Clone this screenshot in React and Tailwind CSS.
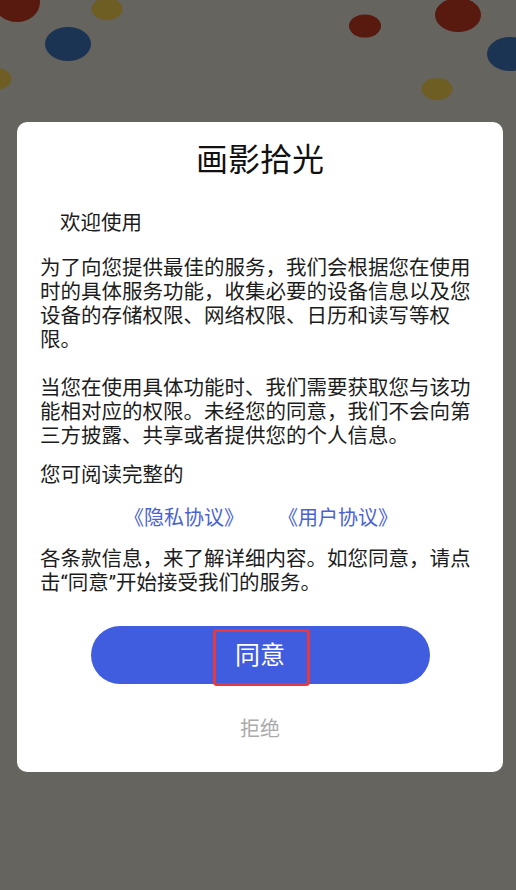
import React from 'react';

const font = { fontFamily: 'Roboto, "Noto Sans CJK SC", sans-serif' };

// dimmed confetti dots behind the dialog
function Dots() {
  return (
    <svg className="absolute left-0 top-0" width="516" height="110" viewBox="0 0 516 110">
      <ellipse cx="17" cy="2" rx="23" ry="20" fill="#58190f" />
      <ellipse cx="107" cy="9" rx="15.5" ry="11" fill="#6e5e23" />
      <ellipse cx="68" cy="44" rx="23" ry="17" fill="#1c3453" />
      <ellipse cx="-4" cy="79" rx="15.5" ry="11" fill="#6e5e23" />
      <ellipse cx="365" cy="26" rx="16" ry="11.5" fill="#58190f" />
      <ellipse cx="458" cy="15" rx="23" ry="17" fill="#58190f" />
      <ellipse cx="510" cy="54" rx="23" ry="17" fill="#1c3453" />
      <ellipse cx="437" cy="89" rx="15.5" ry="11" fill="#6e5e23" />
    </svg>
  );
}

export default function App() {
  return (
    <div className="relative min-h-screen w-[516px] overflow-hidden bg-[#65645e] pt-[122px]" style={font}>
      <Dots />

      <div className="relative mx-[17px] w-[486px] rounded-[10px] bg-white px-[23px] pb-[31px] pt-[18px]">
        {/* Title */}
        <h1 className="text-center text-[32px] leading-[40px] font-normal text-[#111]">画影拾光</h1>

        {/* Body */}
        <div className="mt-[31px] text-[20.5px] leading-[24px] text-[#1c1c1c]">
          <p className="pl-5">欢迎使用</p>
          <p className="mt-[21px]">
            为了向您提供最佳的服务，我们会根据您在使用时的具体服务功能，收集必要的设备信息以及您设备的存储权限、网络权限、日历和读写等权限。
          </p>
          <p className="mt-[24px]">
            当您在使用具体功能时、我们需要获取您与该功能相对应的权限。未经您的同意，我们不会向第三方披露、共享或者提供您的个人信息。
          </p>
          <p className="mt-[15px]">您可阅读完整的</p>

          <div className="mt-[19px] flex justify-center gap-[34px] pl-[2px] text-[20px] text-[#4a63d2]">
            <span>《隐私协议》</span>
            <span>《用户协议》</span>
          </div>

          <p className="mt-[17px]">
            各条款信息，来了解详细内容。如您同意，请点击“同意”开始接受我们的服务。
          </p>
        </div>

        {/* Actions */}
        <div className="mt-[31px] flex flex-col items-center">
          <button className="relative flex h-[58px] w-[339px] items-center justify-center rounded-full bg-[#405ddf] text-[25px] leading-none text-white">
            同意
            <span className="absolute left-[122px] top-[3px] h-[57px] w-[97px] rounded-[4px] border-[3px] border-[#e5383f]" />
          </button>
          <button className="mt-[33px] text-[20px] leading-[24px] text-[#ababab]">拒绝</button>
        </div>
      </div>
    </div>
  );
}
